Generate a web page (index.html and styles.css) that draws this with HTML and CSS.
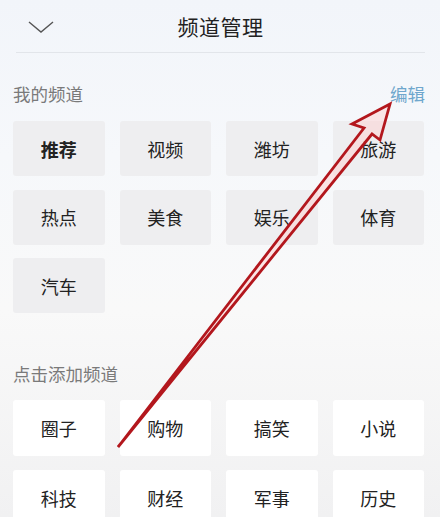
FILE: index.html
```html
<!DOCTYPE html>
<html lang="zh-CN">
<head>
<meta charset="utf-8">
<title>频道管理</title>
<link rel="stylesheet" href="styles.css">
</head>
<body>
<div class="page">
  <header class="topbar">
    <svg class="chevron" width="26" height="14" viewBox="0 0 26 14"><polyline points="1,1 13,11 25,1" fill="none" stroke="#555" stroke-width="1.4"/></svg>
    <h1 class="title">频道管理</h1>
  </header>
  <section class="section mine">
    <div class="sec-head">
      <span class="sec-label">我的频道</span>
      <span class="edit">编辑</span>
    </div>
    <div class="grid">
      <div class="tile gray bold">推荐</div>
      <div class="tile gray">视频</div>
      <div class="tile gray">潍坊</div>
      <div class="tile gray">旅游</div>
      <div class="tile gray">热点</div>
      <div class="tile gray">美食</div>
      <div class="tile gray">娱乐</div>
      <div class="tile gray">体育</div>
      <div class="tile gray">汽车</div>
    </div>
  </section>
  <section class="section add">
    <div class="sec-head">
      <span class="sec-label">点击添加频道</span>
    </div>
    <div class="grid grid-add">
      <div class="tile white">圈子</div>
      <div class="tile white">购物</div>
      <div class="tile white">搞笑</div>
      <div class="tile white">小说</div>
      <div class="tile white">科技</div>
      <div class="tile white">财经</div>
      <div class="tile white">军事</div>
      <div class="tile white">历史</div>
    </div>
  </section>
  <svg class="arrow" width="440" height="517" viewBox="0 0 440 517">
    <polygon points="390,104 352,124 364,128 118,447 372,134 380,140" fill="rgba(255,205,205,0.45)" stroke="#b3171d" stroke-width="2.8" stroke-linejoin="miter"/>
  </svg>
</div>
</body>
</html>
```
FILE: styles.css
```css
html, body {
  margin: 0;
  padding: 0;
}
body {
  width: 440px;
  height: 517px;
  overflow: hidden;
  font-family: "Noto Sans CJK SC", "Noto Sans", sans-serif;
  background: linear-gradient(180deg, #f2f5fa 0%, #f6f8fb 30%, #f9f9f9 60%, #f1f1f2 100%);
  color: #222;
}
.page {
  position: relative;
  width: 440px;
  height: 517px;
}
.topbar {
  position: relative;
  height: 52px;
  margin: 0 15px 0 16px;
  border-bottom: 1px solid #e2e5ea;
  display: flex;
  align-items: center;
  justify-content: center;
}
.chevron {
  position: absolute;
  left: 12px;
  top: 21px;
}
.title {
  margin: 0;
  font-size: 21px;
  font-weight: 400;
  line-height: 52px;
  color: #222;
  letter-spacing: 0.5px;
}
.section {
  padding: 0 16px 0 13px;
}
.sec-head {
  display: flex;
  justify-content: space-between;
  align-items: center;
  height: 22px;
  margin-top: 30px;
}
.add .sec-head {
  margin-top: 50px;
}
.sec-label {
  font-size: 17.5px;
  color: #7a7a7a;
  line-height: 22px;
}
.edit {
  font-size: 17.5px;
  color: #6fa7cd;
  line-height: 22px;
  margin-right: -1px;
}
.grid {
  display: grid;
  grid-template-columns: repeat(4, 1fr);
  column-gap: 15px;
  row-gap: 13.5px;
  margin-top: 16px;
}
.grid-add {
  margin-top: 15px;
  row-gap: 14px;
}
.tile {
  height: 55px;
  border-radius: 3px;
  display: flex;
  align-items: center;
  justify-content: center;
  font-size: 18px;
  color: #222;
}
.grid-add .tile {
  height: 56px;
}
.gray {
  background: #eeeef0;
}
.white {
  background: #ffffff;
}
.bold {
  font-weight: 700;
}
.arrow {
  position: absolute;
  left: 0;
  top: 0;
  pointer-events: none;
}
```
